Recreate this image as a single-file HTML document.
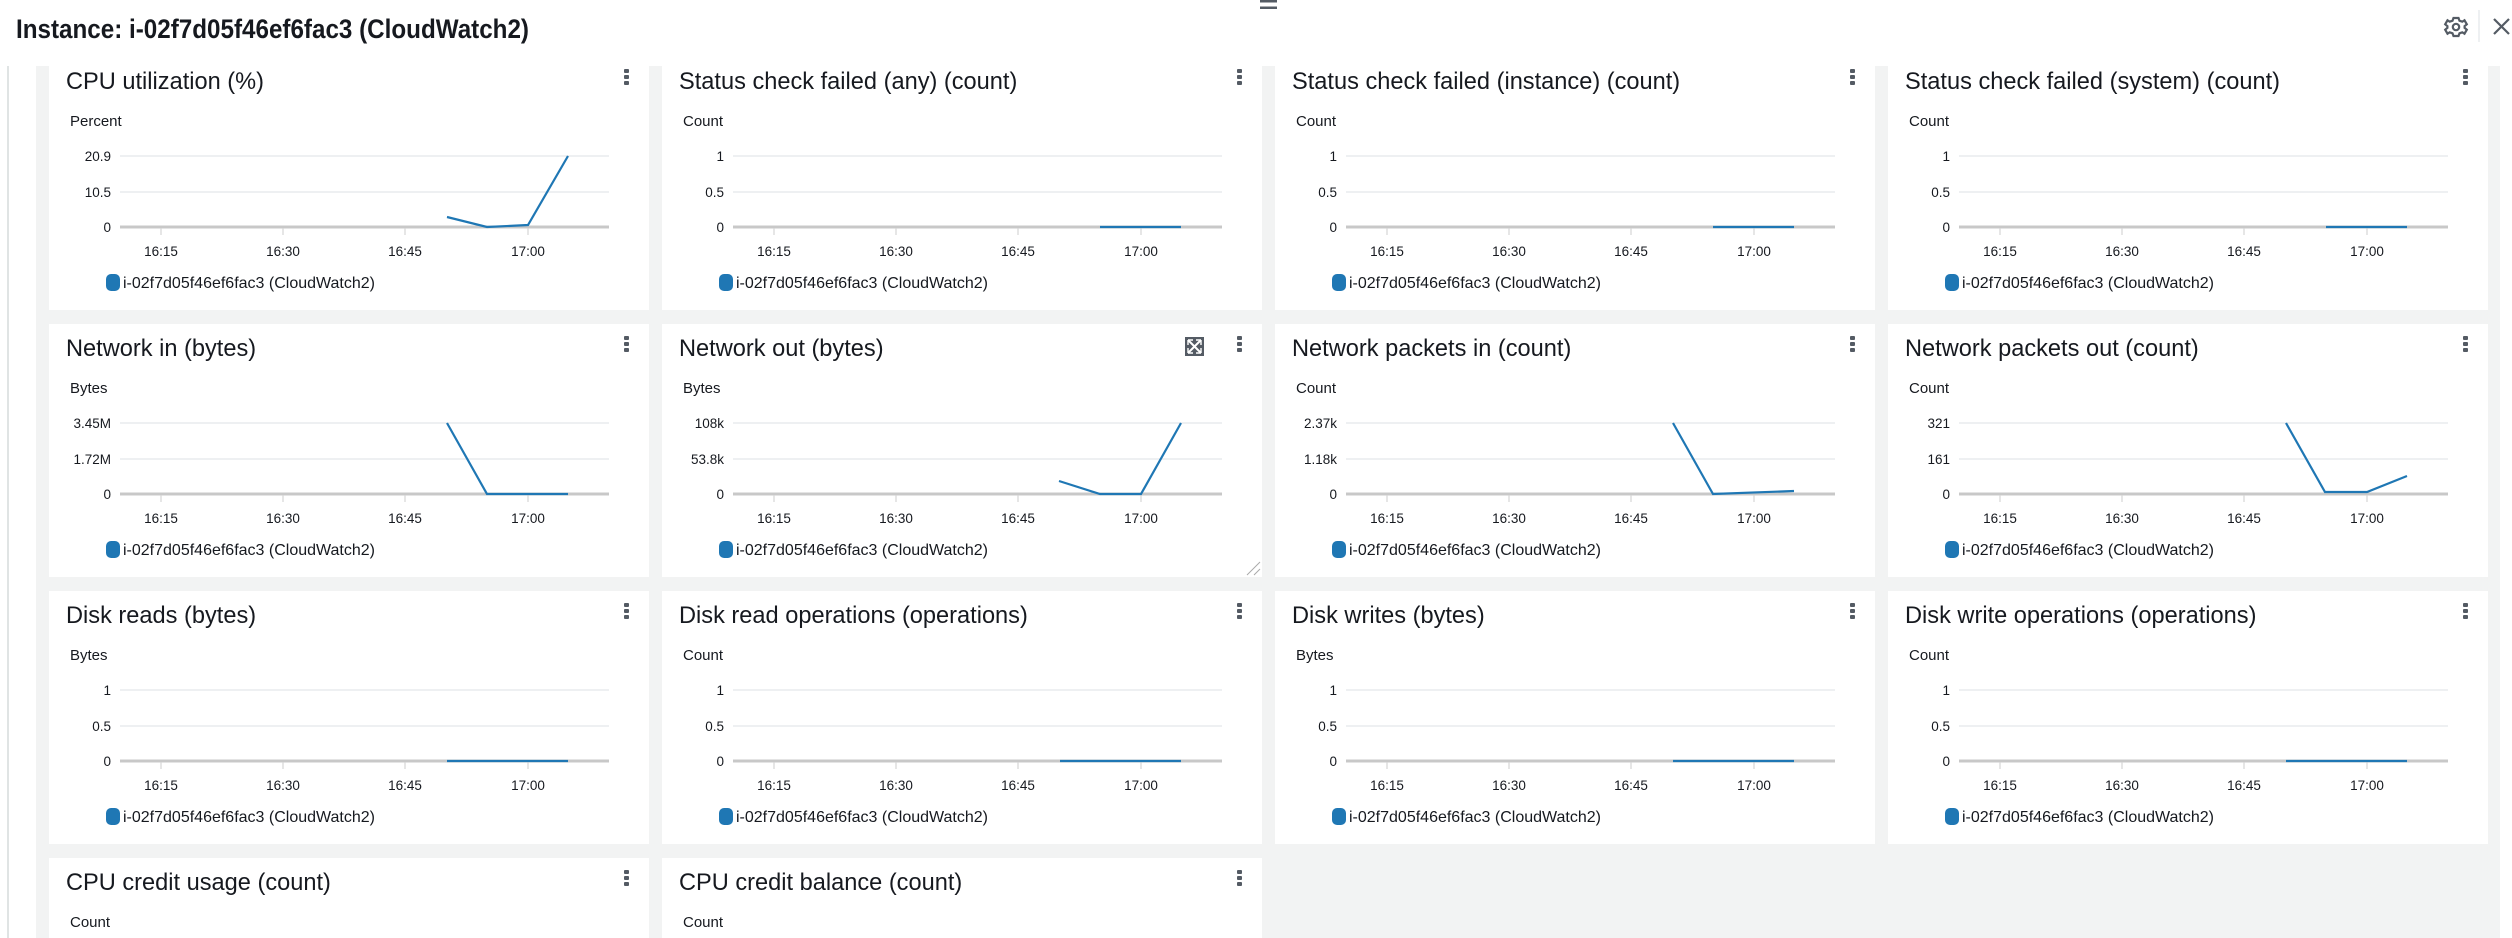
<!DOCTYPE html>
<html><head><meta charset="utf-8"><style>
html,body{margin:0;padding:0;width:2512px;height:938px;overflow:hidden;background:#fff}
svg{display:block}
text{font-family:"Liberation Sans",sans-serif}
.t{font-size:23.6px;fill:#16191f}
.u{font-size:15px;fill:#16191f}
.yl{font-size:13.5px;fill:#16191f;text-anchor:end}
.xl{font-size:13.5px;fill:#16191f;text-anchor:middle}
.lg{font-size:16px;fill:#16191f}
.ln{fill:none;stroke:#1f77b4;stroke-width:2.2}
</style></head><body>
<svg width="2512" height="938" viewBox="0 0 2512 938" xmlns="http://www.w3.org/2000/svg">
<defs>
<g id="dots">
<rect x="575" y="12" width="5" height="4" rx="1" fill="#545b64"/>
<rect x="575" y="18" width="5" height="4" rx="1" fill="#545b64"/>
<rect x="575" y="24" width="5" height="4" rx="1" fill="#545b64"/>
</g>
<g id="base">
<rect x="0" y="0" width="600" height="253" fill="#fff"/>
<use href="#dots"/>
<line x1="71" y1="99" x2="560" y2="99" stroke="#e9ebed" stroke-width="1.5"/>
<line x1="71" y1="135" x2="560" y2="135" stroke="#e9ebed" stroke-width="1.5"/>
<line x1="71" y1="170" x2="560" y2="170" stroke="#c8c8c8" stroke-width="3"/>
<g stroke="#d5d5d5" stroke-width="1.2"><line x1="112" y1="171" x2="112" y2="178"/><line x1="234" y1="171" x2="234" y2="178"/><line x1="356" y1="171" x2="356" y2="178"/><line x1="479" y1="171" x2="479" y2="178"/></g>
<rect x="57" y="217" width="14" height="17" rx="5" fill="#1f77b4"/>
</g>
</defs>
<rect x="36" y="66" width="2464" height="872" fill="#f2f3f3"/>
<line x1="8" y1="66" x2="8" y2="938" stroke="#d5dbdb" stroke-width="1.5"/>

<!-- ROW 1 -->
<g transform="translate(49,57)"><use href="#base"/>
<text class="t" x="17" y="32">CPU utilization (%)</text><text class="u" x="21" y="69">Percent</text>
<text class="yl" x="62" y="104">20.9</text><text class="yl" x="62" y="140">10.5</text><text class="yl" x="62" y="175">0</text>
<text class="xl" x="112" y="199">16:15</text><text class="xl" x="234" y="199">16:30</text><text class="xl" x="356" y="199">16:45</text><text class="xl" x="479" y="199">17:00</text>
<text class="lg" x="74" y="231">i-02f7d05f46ef6fac3 (CloudWatch2)</text>
<polyline class="ln" points="398,160 438,170 479,168 519,99"/></g>

<g transform="translate(662,57)"><use href="#base"/>
<text class="t" x="17" y="32">Status check failed (any) (count)</text><text class="u" x="21" y="69">Count</text>
<text class="yl" x="62" y="104">1</text><text class="yl" x="62" y="140">0.5</text><text class="yl" x="62" y="175">0</text>
<text class="xl" x="112" y="199">16:15</text><text class="xl" x="234" y="199">16:30</text><text class="xl" x="356" y="199">16:45</text><text class="xl" x="479" y="199">17:00</text>
<text class="lg" x="74" y="231">i-02f7d05f46ef6fac3 (CloudWatch2)</text>
<polyline class="ln" points="438,170 519,170"/></g>

<g transform="translate(1275,57)"><use href="#base"/>
<text class="t" x="17" y="32">Status check failed (instance) (count)</text><text class="u" x="21" y="69">Count</text>
<text class="yl" x="62" y="104">1</text><text class="yl" x="62" y="140">0.5</text><text class="yl" x="62" y="175">0</text>
<text class="xl" x="112" y="199">16:15</text><text class="xl" x="234" y="199">16:30</text><text class="xl" x="356" y="199">16:45</text><text class="xl" x="479" y="199">17:00</text>
<text class="lg" x="74" y="231">i-02f7d05f46ef6fac3 (CloudWatch2)</text>
<polyline class="ln" points="438,170 519,170"/></g>

<g transform="translate(1888,57)"><use href="#base"/>
<text class="t" x="17" y="32">Status check failed (system) (count)</text><text class="u" x="21" y="69">Count</text>
<text class="yl" x="62" y="104">1</text><text class="yl" x="62" y="140">0.5</text><text class="yl" x="62" y="175">0</text>
<text class="xl" x="112" y="199">16:15</text><text class="xl" x="234" y="199">16:30</text><text class="xl" x="356" y="199">16:45</text><text class="xl" x="479" y="199">17:00</text>
<text class="lg" x="74" y="231">i-02f7d05f46ef6fac3 (CloudWatch2)</text>
<polyline class="ln" points="438,170 519,170"/></g>

<!-- ROW 2 -->
<g transform="translate(49,324)"><use href="#base"/>
<text class="t" x="17" y="32">Network in (bytes)</text><text class="u" x="21" y="69">Bytes</text>
<text class="yl" x="62" y="104">3.45M</text><text class="yl" x="62" y="140">1.72M</text><text class="yl" x="62" y="175">0</text>
<text class="xl" x="112" y="199">16:15</text><text class="xl" x="234" y="199">16:30</text><text class="xl" x="356" y="199">16:45</text><text class="xl" x="479" y="199">17:00</text>
<text class="lg" x="74" y="231">i-02f7d05f46ef6fac3 (CloudWatch2)</text>
<polyline class="ln" points="398,99 438,170 519,170"/></g>

<g transform="translate(662,324)"><use href="#base"/>
<text class="t" x="17" y="32">Network out (bytes)</text><text class="u" x="21" y="69">Bytes</text>
<text class="yl" x="62" y="104">108k</text><text class="yl" x="62" y="140">53.8k</text><text class="yl" x="62" y="175">0</text>
<text class="xl" x="112" y="199">16:15</text><text class="xl" x="234" y="199">16:30</text><text class="xl" x="356" y="199">16:45</text><text class="xl" x="479" y="199">17:00</text>
<text class="lg" x="74" y="231">i-02f7d05f46ef6fac3 (CloudWatch2)</text>
<polyline class="ln" points="397,157 438,170 479,170 519,99"/>
<g transform="translate(523,13)"><rect x="0" y="0" width="19" height="19" fill="#545b64"/>
<path d="M3 3 L16 16 M16 3 L3 16" stroke="#fff" stroke-width="2"/>
<path d="M3 3 h5 M3 3 v5 M16 3 h-5 M16 3 v5 M3 16 h5 M3 16 v-5 M16 16 h-5 M16 16 v-5" stroke="#fff" stroke-width="1.4"/></g>
<path d="M598 238 L585 251 M598 245 L592 251" stroke="#aaa" stroke-width="1"/></g>

<g transform="translate(1275,324)"><use href="#base"/>
<text class="t" x="17" y="32">Network packets in (count)</text><text class="u" x="21" y="69">Count</text>
<text class="yl" x="62" y="104">2.37k</text><text class="yl" x="62" y="140">1.18k</text><text class="yl" x="62" y="175">0</text>
<text class="xl" x="112" y="199">16:15</text><text class="xl" x="234" y="199">16:30</text><text class="xl" x="356" y="199">16:45</text><text class="xl" x="479" y="199">17:00</text>
<text class="lg" x="74" y="231">i-02f7d05f46ef6fac3 (CloudWatch2)</text>
<polyline class="ln" points="398,99 438,170 519,167"/></g>

<g transform="translate(1888,324)"><use href="#base"/>
<text class="t" x="17" y="32">Network packets out (count)</text><text class="u" x="21" y="69">Count</text>
<text class="yl" x="62" y="104">321</text><text class="yl" x="62" y="140">161</text><text class="yl" x="62" y="175">0</text>
<text class="xl" x="112" y="199">16:15</text><text class="xl" x="234" y="199">16:30</text><text class="xl" x="356" y="199">16:45</text><text class="xl" x="479" y="199">17:00</text>
<text class="lg" x="74" y="231">i-02f7d05f46ef6fac3 (CloudWatch2)</text>
<polyline class="ln" points="398,99 437,168 479,168 519,152"/></g>

<!-- ROW 3 -->
<g transform="translate(49,591)"><use href="#base"/>
<text class="t" x="17" y="32">Disk reads (bytes)</text><text class="u" x="21" y="69">Bytes</text>
<text class="yl" x="62" y="104">1</text><text class="yl" x="62" y="140">0.5</text><text class="yl" x="62" y="175">0</text>
<text class="xl" x="112" y="199">16:15</text><text class="xl" x="234" y="199">16:30</text><text class="xl" x="356" y="199">16:45</text><text class="xl" x="479" y="199">17:00</text>
<text class="lg" x="74" y="231">i-02f7d05f46ef6fac3 (CloudWatch2)</text>
<polyline class="ln" points="398,170 519,170"/></g>

<g transform="translate(662,591)"><use href="#base"/>
<text class="t" x="17" y="32">Disk read operations (operations)</text><text class="u" x="21" y="69">Count</text>
<text class="yl" x="62" y="104">1</text><text class="yl" x="62" y="140">0.5</text><text class="yl" x="62" y="175">0</text>
<text class="xl" x="112" y="199">16:15</text><text class="xl" x="234" y="199">16:30</text><text class="xl" x="356" y="199">16:45</text><text class="xl" x="479" y="199">17:00</text>
<text class="lg" x="74" y="231">i-02f7d05f46ef6fac3 (CloudWatch2)</text>
<polyline class="ln" points="398,170 519,170"/></g>

<g transform="translate(1275,591)"><use href="#base"/>
<text class="t" x="17" y="32">Disk writes (bytes)</text><text class="u" x="21" y="69">Bytes</text>
<text class="yl" x="62" y="104">1</text><text class="yl" x="62" y="140">0.5</text><text class="yl" x="62" y="175">0</text>
<text class="xl" x="112" y="199">16:15</text><text class="xl" x="234" y="199">16:30</text><text class="xl" x="356" y="199">16:45</text><text class="xl" x="479" y="199">17:00</text>
<text class="lg" x="74" y="231">i-02f7d05f46ef6fac3 (CloudWatch2)</text>
<polyline class="ln" points="398,170 519,170"/></g>

<g transform="translate(1888,591)"><use href="#base"/>
<text class="t" x="17" y="32">Disk write operations (operations)</text><text class="u" x="21" y="69">Count</text>
<text class="yl" x="62" y="104">1</text><text class="yl" x="62" y="140">0.5</text><text class="yl" x="62" y="175">0</text>
<text class="xl" x="112" y="199">16:15</text><text class="xl" x="234" y="199">16:30</text><text class="xl" x="356" y="199">16:45</text><text class="xl" x="479" y="199">17:00</text>
<text class="lg" x="74" y="231">i-02f7d05f46ef6fac3 (CloudWatch2)</text>
<polyline class="ln" points="398,170 519,170"/></g>

<!-- ROW 4 -->
<g transform="translate(49,858)"><rect x="0" y="0" width="600" height="100" fill="#fff"/><use href="#dots"/>
<text class="t" x="17" y="32">CPU credit usage (count)</text><text class="u" x="21" y="69">Count</text></g>
<g transform="translate(662,858)"><rect x="0" y="0" width="600" height="100" fill="#fff"/><use href="#dots"/>
<text class="t" x="17" y="32">CPU credit balance (count)</text><text class="u" x="21" y="69">Count</text></g>

<!-- HEADER -->
<rect x="0" y="0" width="2512" height="66" fill="#fff"/>
<text x="16" y="38" font-size="27" font-weight="bold" fill="#16191f" textLength="513" lengthAdjust="spacingAndGlyphs">Instance: i-02f7d05f46ef6fac3 (CloudWatch2)</text>
<rect x="1260" y="0" width="17" height="2.5" fill="#545b64"/>
<rect x="1260" y="6.5" width="17" height="2.5" fill="#545b64"/>
<g transform="translate(2456,27)" fill="none" stroke="#545b64" stroke-width="2.2">
<path d="M-2.5 -9 L2.5 -9 L3.5 -6.3 L6.3 -5.3 L8.5 -6.7 L10.8 -2.7 L8.6 -0.9 L8.6 0.9 L10.8 2.7 L8.5 6.7 L6.3 5.3 L3.5 6.3 L2.5 9 L-2.5 9 L-3.5 6.3 L-6.3 5.3 L-8.5 6.7 L-10.8 2.7 L-8.6 0.9 L-8.6 -0.9 L-10.8 -2.7 L-8.5 -6.7 L-6.3 -5.3 L-3.5 -6.3 Z"/>
<circle cx="0" cy="0" r="3.2"/></g>
<line x1="2479" y1="10" x2="2479" y2="42" stroke="#e9ebed" stroke-width="1.5"/>
<path d="M2494 19 L2509 34 M2509 19 L2494 34" stroke="#545b64" stroke-width="2.2"/>
</svg>
</body></html>
